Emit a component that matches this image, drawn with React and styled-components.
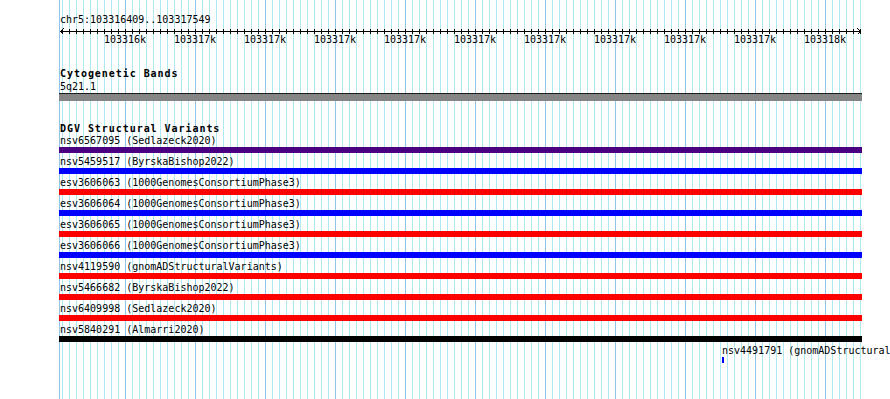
import React from "react";
import styled, { createGlobalStyle } from "styled-components";

const GlobalStyle = createGlobalStyle`
  html, body {
    margin: 0;
    padding: 0;
    background: #ffffff;
    overflow: hidden;
  }
  body {
    font-family: "DejaVu Sans Mono", "Liberation Mono", monospace;
    font-size: 10px;
    color: #000;
  }
`;

const MINOR = "#aee8f0";
const MAJOR = "#8ec5e9";

const Canvas = styled.div`
  position: relative;
  margin-left: 59px;
  width: 803px;
  height: 399px;
  box-sizing: border-box;
  padding-top: 14px;
  display: flex;
  flex-direction: column;
  border-left: 1px solid ${MAJOR};
  background-image:
    linear-gradient(to right, transparent 65px, ${MAJOR} 65px, ${MAJOR} 66px, transparent 66px),
    linear-gradient(to right, transparent 2px, ${MINOR} 2px, ${MINOR} 3px, transparent 3px);
  background-size: 70px 100%, 7px 100%;
  background-repeat: repeat-x, repeat-x;
  background-position: 0 0, 0 0;
`;

const TextLine = styled.div`
  height: 12px;
  line-height: 12px;
  font-size: 10px;
  white-space: nowrap;
  margin-top: ${(p) => p.$mt || 0}px;
`;

const TrackTitle = styled.div`
  height: 12px;
  line-height: 12px;
  font-size: 10px;
  font-weight: bold;
  letter-spacing: 0.95px;
  white-space: nowrap;
  margin-top: ${(p) => p.$mt || 0}px;
`;

const RulerSvg = styled.svg`
  display: block;
  margin-left: -1px;
  width: 803px;
  height: 7px;
  margin-top: 1px;
`;

const TickLabels = styled.div`
  display: flex;
  margin-left: 30px;
  height: 12px;
  line-height: 12px;
`;

const TickLabel = styled.div`
  width: 70px;
  flex: none;
  text-align: center;
  white-space: nowrap;
`;

const BandBar = styled.div`
  margin-left: -1px;
  height: 7px;
  background: #858585;
  border-top: 1px solid #1c1c1c;
`;

const Features = styled.div`
  display: flex;
  flex-direction: column;
  gap: 3px;
`;

const Feature = styled.div`
  display: flex;
  flex-direction: column;
  margin-left: ${(p) => p.$offset || 0}px;
`;

const FeatureLabel = styled.div`
  height: 12px;
  line-height: 12px;
  white-space: nowrap;
`;

const FeatureBar = styled.div`
  height: 6px;
  margin-left: ${(p) => (p.$offset ? 0 : -1)}px;
  width: ${(p) => (p.$width ? `${p.$width}px` : "auto")};
  background: ${(p) => p.$color};
`;

function Ruler() {
  const ticks = [];
  for (let k = 0; k < 115; k++) {
    const x = 3.5 + 7 * k;
    ticks.push(<line key={k} x1={x} y1={2} x2={x} y2={7} stroke="#000" strokeWidth="1" />);
  }
  return (
    <RulerSvg viewBox="0 0 803 7" shapeRendering="crispEdges">
      <line x1="1" y1="4.5" x2="802" y2="4.5" stroke="#000" strokeWidth="1" />
      {ticks}
      <polyline points="5,1 1.5,4.5 5,8" fill="none" stroke="#000" strokeWidth="1" shapeRendering="auto" />
      <polyline points="798,1 801.5,4.5 798,8" fill="none" stroke="#000" strokeWidth="1" shapeRendering="auto" />
    </RulerSvg>
  );
}

const tickLabels = [
  "103316k", "103317k", "103317k", "103317k", "103317k", "103317k",
  "103317k", "103317k", "103317k", "103317k", "103318k",
];

const PURPLE = "#4b0082";
const BLUE = "#0000ff";
const RED = "#ff0000";
const BLACK = "#000000";

const features = [
  { label: "nsv6567095 (Sedlazeck2020)", color: PURPLE },
  { label: "nsv5459517 (ByrskaBishop2022)", color: BLUE },
  { label: "esv3606063 (1000GenomesConsortiumPhase3)", color: RED },
  { label: "esv3606064 (1000GenomesConsortiumPhase3)", color: BLUE },
  { label: "esv3606065 (1000GenomesConsortiumPhase3)", color: RED },
  { label: "esv3606066 (1000GenomesConsortiumPhase3)", color: BLUE },
  { label: "nsv4119590 (gnomADStructuralVariants)", color: RED },
  { label: "nsv5466682 (ByrskaBishop2022)", color: RED },
  { label: "nsv6409998 (Sedlazeck2020)", color: RED },
  { label: "nsv5840291 (Almarri2020)", color: BLACK },
  { label: "nsv4491791 (gnomADStructuralVariants)", color: BLUE, offset: 662, width: 2 },
];

export default function App() {
  return (
    <>
      <GlobalStyle />
      <Canvas>
        <TextLine>chr5:103316409..103317549</TextLine>
        <Ruler />
        <TickLabels>
          {tickLabels.map((t, i) => (
            <TickLabel key={i}>{t}</TickLabel>
          ))}
        </TickLabels>
        <TrackTitle $mt={22}>Cytogenetic Bands</TrackTitle>
        <TextLine $mt={1}>5q21.1</TextLine>
        <BandBar />
        <TrackTitle $mt={22}>DGV Structural Variants</TrackTitle>
        <Features>
          {features.map((f, i) => (
            <Feature key={i} $offset={f.offset}>
              <FeatureLabel>{f.label}</FeatureLabel>
              <FeatureBar $color={f.color} $offset={f.offset} $width={f.width} />
            </Feature>
          ))}
        </Features>
      </Canvas>
    </>
  );
}
